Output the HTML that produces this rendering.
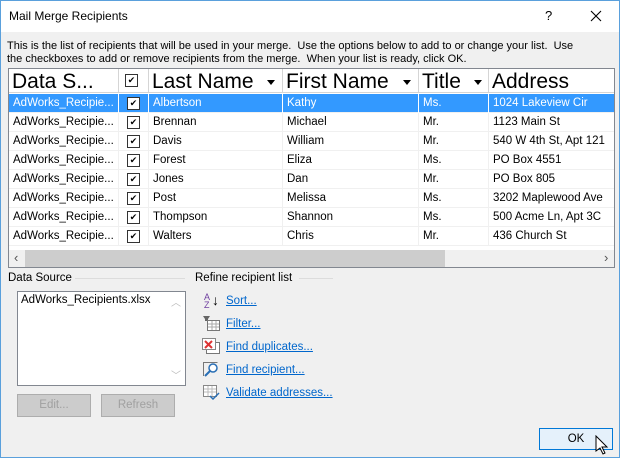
<!DOCTYPE html>
<html><head><style>
*{margin:0;padding:0;box-sizing:border-box}
body{width:620px;height:458px;overflow:hidden;font-family:"Liberation Sans",sans-serif;font-size:11.5px;color:#000;background:#f0f0f0;position:relative}
.win{position:absolute;left:0;top:0;width:620px;height:458px;border:1px solid #5aa0dc;background:#f0f0f0}
.title{position:absolute;left:0;top:0;width:618px;height:31px;background:#fff}
.a{position:absolute;white-space:nowrap}
.grid{position:absolute;left:7px;top:67px;width:607px;height:200px;border:1px solid #828790;background:#fff;overflow:hidden}
.hdr{position:absolute;top:0;height:24px;background:#fff;border-right:1px solid #d5d5d5;border-bottom:1px solid #d5d5d5;font-size:21px;line-height:26px;padding-left:3px;overflow:hidden}
.row{position:absolute;left:0;width:606px;height:19px;border-bottom:1px solid #f0f0f0}
.c{position:absolute;top:0;height:19px;line-height:19px;padding-left:4px;border-right:1px solid #f0f0f0;overflow:hidden;font-size:11.5px}
.sel .c{color:#fff;border-right-color:#fff}
.cb{position:absolute;width:13px;height:13px;border:1px solid #333;background:#fff;font-size:9px;line-height:11px;text-align:center;color:#000}
.tri{display:inline-block;border-left:4px solid transparent;border-right:4px solid transparent;border-top:5px solid #000;position:absolute;top:11px}
.lnk{position:absolute;left:225px;color:#0066cc;text-decoration:underline}
.btn{position:absolute;height:23px;border:1px solid #adadad;background:#cccccc;color:#a0a0a0;text-align:center;line-height:21px}
</style></head><body>
<div class="win">
<div class="title"></div>
<div class="a" style="left:8px;top:8px;font-size:12px">Mail Merge Recipients</div>
<div class="a" style="left:544px;top:7px;font-size:13px">?</div>
<svg class="a" style="left:589px;top:9px" width="12" height="12"><path d="M1 1l10 10M11 1L1 11" stroke="#000" stroke-width="1.1"/></svg>
<div class="a" style="left:6px;top:39px;font-size:11px;line-height:13px">This is the list of recipients that will be used in your merge.&nbsp; Use the options below to add to or change your list.&nbsp; Use<br>the checkboxes to add or remove recipients from the merge.&nbsp; When your list is ready, click OK.</div>
<div class="grid">
<div class="hdr" style="left:0;width:110px">Data S...</div>
<div class="hdr" style="left:110px;width:30px"><div class="cb" style="left:6px;top:5px">✔</div></div>
<div class="hdr" style="left:140px;width:134px">Last Name<span class="tri" style="left:118px"></span></div>
<div class="hdr" style="left:274px;width:136px">First Name<span class="tri" style="left:120px"></span></div>
<div class="hdr" style="left:410px;width:70px">Title<span class="tri" style="left:55px"></span></div>
<div class="hdr" style="left:480px;width:130px;border-right:none">Address</div>
<div id="rows"></div>
<div style="position:absolute;left:0;top:181px;width:606px;height:17px;background:#f0f0f0"></div>
<div class="a" style="left:5px;top:181px;font-size:13px;color:#555">‹</div>
<div style="position:absolute;left:16px;top:181px;width:420px;height:17px;background:#cdcdcd"></div>
<div class="a" style="left:595px;top:181px;font-size:13px;color:#555">›</div>
</div>
<div class="a" style="left:7px;top:271px">Data Source</div>
<div style="position:absolute;left:74px;top:277px;width:110px;border-top:1px solid #dcdcdc"></div>
<div style="position:absolute;left:16px;top:290px;width:169px;height:95px;border:1px solid #828790;background:#fff"></div>
<div class="a" style="left:20px;top:293px">AdWorks_Recipients.xlsx</div>
<div class="a" style="left:170px;top:293px;color:#bbb;font-size:10px">︿</div>
<div class="a" style="left:170px;top:366px;color:#bbb;font-size:10px">﹀</div>
<div class="btn" style="left:16px;top:393px;width:74px">Edit...</div>
<div class="btn" style="left:100px;top:393px;width:74px">Refresh</div>
<div class="a" style="left:194px;top:271px">Refine recipient list</div>
<div style="position:absolute;left:298px;top:277px;width:34px;border-top:1px solid #dcdcdc"></div>
<div class="a" style="left:203px;top:292px;font-size:9px;line-height:8px;color:#7040a0">A<br>Z</div><div class="a" style="left:211px;top:291px;font-size:14px">↓</div>
<div class="lnk" style="top:294px">Sort...</div>
<svg class="a" style="left:201px;top:314px" width="18" height="16"><path d="M1 1h7l-2 3v2H3V4z" fill="#666"/><rect x="5.5" y="5.5" width="12" height="10" fill="#fff" stroke="#777"/><path d="M6 9h11M6 12h11M10 6v9M14 6v9" stroke="#aaa"/></svg>
<div class="lnk" style="top:317px">Filter...</div>
<svg class="a" style="left:201px;top:337px" width="18" height="16"><rect x="4.5" y="4.5" width="13" height="11" fill="#fff" stroke="#777"/><rect x=".5" y=".5" width="13" height="11" fill="#fff" stroke="#888"/><path d="M3 3l7 7M10 3l-7 7" stroke="#d33" stroke-width="2"/></svg>
<div class="lnk" style="top:340px">Find duplicates...</div>
<svg class="a" style="left:201px;top:360px" width="18" height="16"><path d="M1.5 15V1.5h14" fill="none" stroke="#777"/><circle cx="11" cy="7" r="4" fill="#fff" stroke="#2a6fb5" stroke-width="1.5"/><path d="M8 10l-5 5" stroke="#2a6fb5" stroke-width="2"/></svg>
<div class="lnk" style="top:363px">Find recipient...</div>
<svg class="a" style="left:201px;top:383px" width="18" height="16"><rect x="1.5" y="1.5" width="13" height="11" fill="#fff" stroke="#888"/><path d="M2 5h12M2 8h12M6 2v10M10 2v10" stroke="#bbb"/><path d="M8 12l3 3 6-6" fill="none" stroke="#2a6fb5" stroke-width="1.5"/></svg>
<div class="lnk" style="top:386px">Validate addresses...</div>
<div style="position:absolute;left:538px;top:427px;width:74px;height:22px;border:1px solid #0078d7;background:#e5f1fb;text-align:center;line-height:20px">OK</div>
<svg class="a" style="left:594px;top:434px" width="14" height="20"><path d="M1 1v15l4-3 3 6 2-1-3-6h5z" fill="#fff" stroke="#000"/></svg>
</div>
<script>
var d=[["Albertson","Kathy","Ms.","1024 Lakeview Cir"],["Brennan","Michael","Mr.","1123 Main St"],["Davis","William","Mr.","540 W 4th St, Apt 121"],["Forest","Eliza","Ms.","PO Box 4551"],["Jones","Dan","Mr.","PO Box 805"],["Post","Melissa","Ms.","3202 Maplewood Ave"],["Thompson","Shannon","Ms.","500 Acme Ln, Apt 3C"],["Walters","Chris","Mr.","436 Church St"]];
var h="";d.forEach(function(r,i){var s=i==0;h+='<div class="row'+(s?' sel':'')+'" style="top:'+(25+i*19)+'px;'+(s?'background:#3399ff':'')+'">'+
'<div class="c" style="left:0;width:110px">AdWorks_Recipie...</div><div class="c" style="left:110px;width:30px"><div class="cb" style="left:8px;top:3px">✔</div></div>'+
'<div class="c" style="left:140px;width:134px">'+r[0]+'</div><div class="c" style="left:274px;width:136px">'+r[1]+'</div><div class="c" style="left:410px;width:70px">'+r[2]+'</div><div class="c" style="left:480px;width:130px;border-right:none">'+r[3]+'</div></div>';});
document.getElementById("rows").innerHTML=h;
</script>
</body></html>
